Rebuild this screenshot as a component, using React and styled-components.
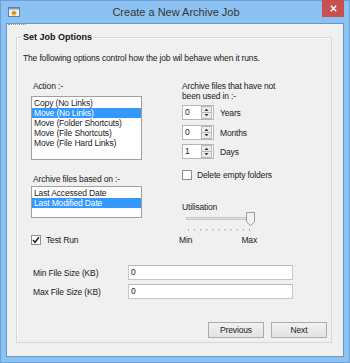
import React from 'react';
import styled, { createGlobalStyle } from 'styled-components';

const Global = createGlobalStyle`
  html, body { margin: 0; padding: 0; }
  body { width: 350px; height: 363px; overflow: hidden; background: #fff; }
`;

const Frame = styled.div`
  box-sizing: border-box;
  width: 350px;
  height: 363px;
  background: #8cc2f2;
  border: 1px solid #6f9fd6;
  padding: 0 5px 5px;
  display: flex;
  flex-direction: column;
  font-family: "Liberation Sans", Arial, sans-serif;
`;

const TitleBar = styled.div`
  height: 22px;
  display: grid;
  grid-template-columns: 1fr auto 1fr;
  align-items: center;
  padding-left: 2px;
`;

const TitleText = styled.div`
  font-size: 11px;
  color: #343434;
  line-height: 14px;
`;

const CloseBtn = styled.div`
  justify-self: end;
  align-self: start;
  margin-top: -1px;
  width: 22px;
  height: 17px;
  background: #c75050;
  display: flex;
  align-items: center;
  justify-content: center;
`;

const Client = styled.div`
  flex: 1;
  background: #f0f0f0;
  border: 1px solid #6597cd;
  display: flex;
  flex-direction: column;
  font-size: 8.5px;
  letter-spacing: -0.15px;
  color: #1a1a1a;
`;

const Grip = styled.div`
  margin-left: 1px;
  width: 18px;
  border-top: 1px dotted #9a9a9a;
`;

const GroupBox = styled.fieldset`
  margin: 7px 11px 0 9px;
  padding: 0 4px 4px 0;
  min-width: 0;
  border: 1px solid #d8d8d8;
  box-shadow: inset 1px 1px 0 #fbfbfb;
`;

const Caption = styled.legend`
  margin-left: 5px;
  padding: 0 1px;
  font-weight: bold;
  font-size: 9px;
  letter-spacing: 0;
  line-height: 11px;
  color: #111;
`;

const Body = styled.div`
  padding: 10px 0 0 6px;
  display: flex;
  flex-direction: column;
`;

const Text = styled.div`
  line-height: 10px;
  white-space: nowrap;
  padding-left: ${p => p.$indent || 0}px;
  margin-top: ${p => p.$mt || 0}px;
`;

const Columns = styled.div`
  margin: 18px 0 0 8px;
  display: grid;
  grid-template-columns: 111px 1fr;
  column-gap: 40px;
`;

const Column = styled.div`
  display: flex;
  flex-direction: column;
  align-items: flex-start;
`;

const ListBox = styled.div`
  box-sizing: border-box;
  width: 111px;
  height: ${p => p.$h}px;
  margin-top: ${p => p.$mt}px;
  background: #fff;
  border: 1px solid #a0a0a0;
  padding: 1px 0;
`;

const ListItem = styled.div`
  height: 10px;
  line-height: 10px;
  padding-left: 2px;
  white-space: nowrap;
  background: ${p => (p.$sel ? '#3399ff' : 'transparent')};
  color: ${p => (p.$sel ? '#ffffff' : '#1a1a1a')};
`;

const CheckRow = styled.div`
  display: flex;
  align-items: center;
  gap: ${p => p.$gap}px;
  margin-top: ${p => p.$mt}px;
  line-height: 10px;
`;

const Box = styled.div`
  box-sizing: border-box;
  width: 10px;
  height: 10px;
  background: #fff;
  border: 1px solid #8e8f8f;
  display: flex;
  align-items: center;
  justify-content: center;
`;

const SpinRow = styled.div`
  display: flex;
  align-items: center;
  gap: 6px;
  margin-top: ${p => p.$mt}px;
  line-height: 10px;
`;

const Spin = styled.div`
  box-sizing: border-box;
  width: 32px;
  height: 15px;
  background: #fff;
  border: 1px solid #b4b6bb;
  display: flex;
  align-items: center;
  padding-right: 1px;
`;

const SpinValue = styled.span`
  flex: 1;
  padding-left: 2px;
  line-height: 13px;
`;

const Slider = styled.svg`
  display: block;
  margin-top: 0;
`;

const Scale = styled.div`
  width: 78px;
  margin-left: -3px;
  display: flex;
  justify-content: space-between;
  line-height: 10px;
`;

const FieldGrid = styled.div`
  margin: 20px 0 0 8px;
  display: grid;
  grid-template-columns: 97px 165px;
  row-gap: 4px;
  align-items: center;
`;

const Input = styled.div`
  box-sizing: border-box;
  height: 15px;
  background: #fff;
  border: 1px solid #c6c6c6;
  border-top-color: #b9b9b9;
  padding-left: 2px;
  line-height: 13px;
`;

const ButtonRow = styled.div`
  margin-top: 23px;
  display: flex;
  justify-content: flex-end;
  gap: 7px;
`;

const Button = styled.div`
  box-sizing: border-box;
  width: 56px;
  height: 16px;
  border: 1px solid #acacac;
  background: linear-gradient(#f1f1f1, #e3e3e3);
  display: flex;
  align-items: center;
  justify-content: center;
  line-height: 10px;
`;

const AppIcon = () => (
  <svg width="12" height="10" viewBox="0 0 12 10">
    <rect x="0.5" y="0.5" width="11" height="9" fill="#eef3f9" stroke="#5d7fae" />
    <rect x="1" y="1" width="10" height="1.5" fill="#7d9cc6" />
    <circle cx="6" cy="6" r="2.6" fill="#f2b233" />
    <path d="M4.6 5.2 L6 7.2 L7.4 5.2 Z" fill="#c05a10" />
  </svg>
);

const CloseIcon = () => (
  <svg width="7" height="7" viewBox="0 0 7 7">
    <path d="M0.8 0.8 L6.2 6.2 M6.2 0.8 L0.8 6.2" stroke="#fff" strokeWidth="1.5" />
  </svg>
);

const SpinButtons = () => (
  <svg width="11" height="13" viewBox="0 0 11 13">
    <rect x="0.5" y="0.5" width="10" height="12" fill="#ececec" stroke="#b8b8b8" />
    <line x1="1" y1="6.5" x2="10" y2="6.5" stroke="#b8b8b8" />
    <path d="M3.5 5 L5.5 2.8 L7.5 5 Z" fill="#333" />
    <path d="M3.5 8 L5.5 10.2 L7.5 8 Z" fill="#333" />
  </svg>
);

const CheckMark = () => (
  <svg width="8" height="8" viewBox="0 0 8 8">
    <path d="M1 4 L3 6.3 L7 1.2" fill="none" stroke="#222" strokeWidth="1.5" />
  </svg>
);

const ticks = Array.from({ length: 11 }, (_, i) => 6 + i * 6.1);

const UtilSlider = () => (
  <Slider width="76" height="23" viewBox="0 0 76 23">
    <rect x="4.5" y="5.5" width="66" height="2" fill="#e6e6e6" stroke="#c4c4c4" />
    {ticks.map((x) => (
      <rect key={x} x={x} y="17" width="1" height="1.5" fill="#9a9a9a" />
    ))}
    <path d="M64.5 0.5 H72.5 V10 L68.5 13.5 L64.5 10 Z" fill="#f2f2f2" stroke="#9c9c9c" />
  </Slider>
);

const SpinField = ({ value, label, mt }) => (
  <SpinRow $mt={mt}>
    <Spin>
      <SpinValue>{value}</SpinValue>
      <SpinButtons />
    </Spin>
    <span>{label}</span>
  </SpinRow>
);

export default function App() {
  return (
    <>
      <Global />
      <Frame>
        <TitleBar>
          <AppIcon />
          <TitleText>Create a New Archive Job</TitleText>
          <CloseBtn>
            <CloseIcon />
          </CloseBtn>
        </TitleBar>
        <Client>
          <Grip />
          <GroupBox>
            <Caption>Set Job Options</Caption>
            <Body>
              <Text>The following options control how the job wil behave when it runs.</Text>
              <Columns>
                <Column>
                  <Text $indent={2}>Action :-</Text>
                  <ListBox $h={64} $mt={5}>
                    <ListItem>Copy (No Links)</ListItem>
                    <ListItem $sel>Move (No Links)</ListItem>
                    <ListItem>Move (Folder Shortcuts)</ListItem>
                    <ListItem>Move (File Shortcuts)</ListItem>
                    <ListItem>Move (File Hard Links)</ListItem>
                  </ListBox>
                  <Text $indent={2} $mt={14}>Archive files based on :-</Text>
                  <ListBox $h={32} $mt={2}>
                    <ListItem>Last Accessed Date</ListItem>
                    <ListItem $sel>Last Modified Date</ListItem>
                  </ListBox>
                  <CheckRow $gap={5} $mt={17}>
                    <Box>
                      <CheckMark />
                    </Box>
                    <span>Test Run</span>
                  </CheckRow>
                </Column>
                <Column>
                  <Text>Archive files that have not</Text>
                  <Text>been used in :-</Text>
                  <SpinField value="0" label="Years" mt={4} />
                  <SpinField value="0" label="Months" mt={5} />
                  <SpinField value="1" label="Days" mt={4} />
                  <CheckRow $gap={5} $mt={11}>
                    <Box />
                    <span>Delete empty folders</span>
                  </CheckRow>
                  <Text $mt={22}>Utilisation</Text>
                  <UtilSlider />
                  <Scale>
                    <span>Min</span>
                    <span>Max</span>
                  </Scale>
                </Column>
              </Columns>
              <FieldGrid>
                <Text $indent={2}>Min File Size (KB)</Text>
                <Input>0</Input>
                <Text $indent={2}>Max File Size (KB)</Text>
                <Input>0</Input>
              </FieldGrid>
              <ButtonRow>
                <Button>Previous</Button>
                <Button>Next</Button>
              </ButtonRow>
            </Body>
          </GroupBox>
        </Client>
      </Frame>
    </>
  );
}
